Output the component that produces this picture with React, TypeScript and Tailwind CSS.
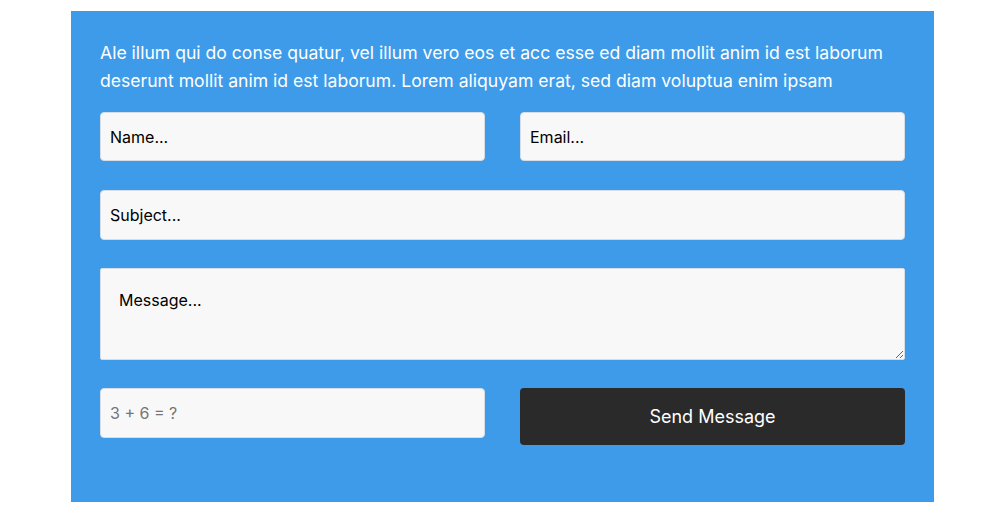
export default function App() {
  return (
    <div className="min-h-[510px] w-full bg-white pt-[11px]" style={{ fontFamily: 'Inter, "Noto Sans", sans-serif' }}>
      <div className="ml-[71px] h-[491px] w-[863px] bg-[#3d9be9] px-[29px] pt-[28px]">
        <p className="text-[17.6px] leading-[28px] text-white">
          Ale illum qui do conse quatur, vel illum vero eos et acc esse ed diam mollit anim id est laborum deserunt mollit anim id est laborum. Lorem aliquyam erat, sed diam voluptua enim ipsam
        </p>
        <form className="mt-[17px] flex flex-col" onSubmit={(e) => e.preventDefault()}>
          <div className="flex gap-[35px]">
            <input
              className="h-[49px] w-[385px] rounded-[4px] border border-[#d6dde4] bg-[#f8f8f8] px-[9px] text-[16px] text-black placeholder:text-black outline-none"
              placeholder="Name..."
            />
            <input
              className="h-[49px] w-[385px] rounded-[4px] border border-[#d6dde4] bg-[#f8f8f8] px-[9px] text-[16px] text-black placeholder:text-black outline-none"
              placeholder="Email..."
            />
          </div>
          <input
            className="mt-[29px] h-[50px] w-[805px] rounded-[4px] border border-[#d6dde4] bg-[#f8f8f8] px-[9px] text-[16px] text-black placeholder:text-black outline-none"
            placeholder="Subject..."
          />
          <textarea
            className="mt-[28px] h-[92px] w-[805px] rounded-[2px] border border-[#d6dde4] bg-[#f8f8f8] px-[18px] pt-[20px] text-[16px] leading-[22px] text-black placeholder:text-black outline-none"
            placeholder="Message..."
          />
          <div className="mt-[28px] flex items-start gap-[35px]">
            <input
              className="h-[50px] w-[385px] rounded-[4px] border border-[#d6dde4] bg-[#f8f8f8] px-[9px] text-[16px] text-[#757575] placeholder:text-[#757575] outline-none"
              placeholder="3 + 6 = ?"
            />
            <button
              type="submit"
              className="h-[57px] w-[385px] rounded-[4px] bg-[#2a2a2a] text-[18px] text-white"
            >
              Send Message
            </button>
          </div>
        </form>
      </div>
    </div>
  );
}
